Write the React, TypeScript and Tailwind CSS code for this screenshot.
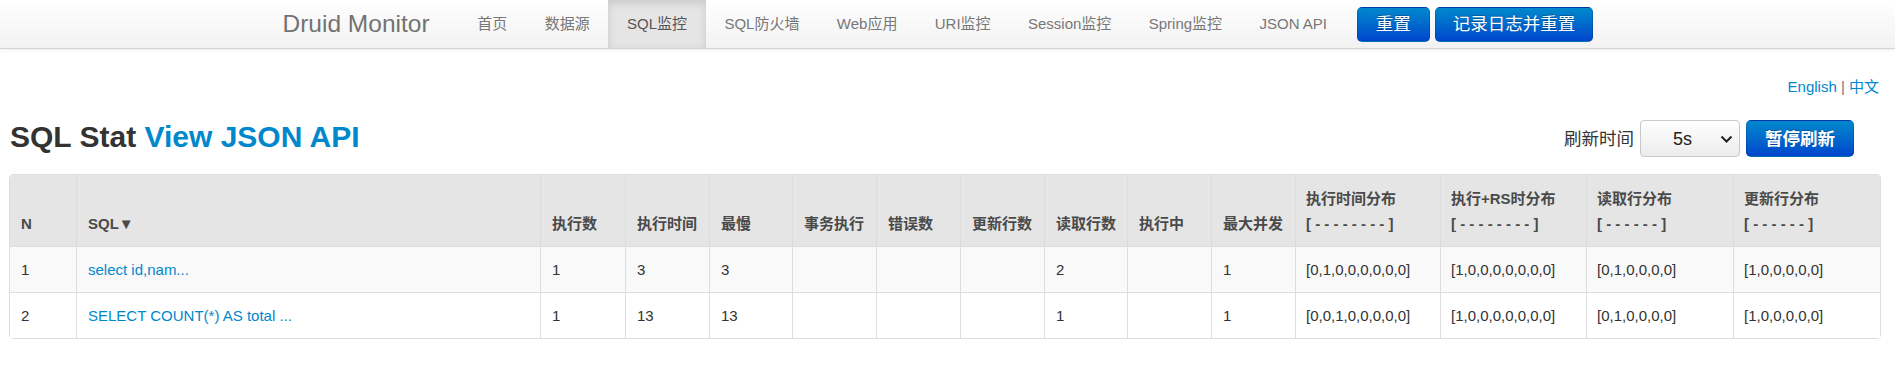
import React from "react";

const navItems = ["首页", "数据源", "SQL监控", "SQL防火墙", "Web应用", "URI监控", "Session监控", "Spring监控", "JSON API"];

const cols = [66, 464, 85, 84, 83, 84, 84, 84, 83, 84, 84, 145, 146, 147, 147];

const simpleHeads = ["执行数", "执行时间", "最慢", "事务执行", "错误数", "更新行数", "读取行数", "执行中", "最大并发"];
const distHeads: [string, string][] = [
  ["执行时间分布", "[ - - - - - - - - ]"],
  ["执行+RS时分布", "[ - - - - - - - - ]"],
  ["读取行分布", "[ - - - - - - ]"],
  ["更新行分布", "[ - - - - - - ]"],
];

const rows = [
  {
    n: "1",
    sql: "select id,nam...",
    vals: ["1", "3", "3", "", "", "", "2", "", "1"],
    dist: ["[0,1,0,0,0,0,0,0]", "[1,0,0,0,0,0,0,0]", "[0,1,0,0,0,0]", "[1,0,0,0,0,0]"],
  },
  {
    n: "2",
    sql: "SELECT COUNT(*) AS total ...",
    vals: ["1", "13", "13", "", "", "", "1", "", "1"],
    dist: ["[0,0,1,0,0,0,0,0]", "[1,0,0,0,0,0,0,0]", "[0,1,0,0,0,0]", "[1,0,0,0,0,0]"],
  },
];

export default function App() {
  return (
    <div className="min-h-[374px] bg-white font-['Liberation_Sans','Noto_Sans_CJK_SC',sans-serif] text-[#333]">
      {/* navbar */}
      <div className="h-[49px] bg-gradient-to-b from-white to-[#f2f2f2] border-b border-[#d4d4d4] shadow-[0_1px_4px_rgba(0,0,0,0.065)]">
        <div className="mx-auto w-[1370px] pl-[20px] flex items-center h-[48px]">
          <div className="text-[24.5px] leading-[30px] text-[#737373] mr-[29px]">Druid Monitor</div>
          <div className="flex h-[48px]">
            {navItems.map((t) => (
              <div
                key={t}
                className={
                  t === "SQL监控"
                    ? "h-[48px] flex items-center px-[18.7px] text-[15px] leading-[20px] text-[#555] bg-[#e5e5e5] shadow-[inset_0_3px_8px_rgba(0,0,0,0.125)]"
                    : "h-[48px] flex items-center px-[18.7px] text-[15px] leading-[20px] text-[#777]"
                }
              >
                {t}
              </div>
            ))}
          </div>
          <div className="flex gap-[5px] ml-[11px]">
            <div className="h-[35px] px-[18px] flex items-center rounded-[5px] bg-gradient-to-b from-[#0088cc] to-[#0044cc] border border-[rgba(0,0,0,0.15)] text-white text-[17.5px] leading-[20px] [text-shadow:0_-1px_0_rgba(0,0,0,0.25)]">
              重置
            </div>
            <div className="h-[35px] px-[17px] flex items-center rounded-[5px] bg-gradient-to-b from-[#0088cc] to-[#0044cc] border border-[rgba(0,0,0,0.15)] text-white text-[17.5px] leading-[20px] [text-shadow:0_-1px_0_rgba(0,0,0,0.25)]">
              记录日志并重置
            </div>
          </div>
        </div>
      </div>

      {/* content */}
      <div className="pl-[9px] pr-[16px]">
        <div className="mt-[28px] text-right text-[15px] leading-[20px]">
          <span className="text-[#0088cc]">English</span>
          <span className="text-[#777]"> | </span>
          <span className="text-[#0088cc]">中文</span>
        </div>

        <div className="mt-[23px] h-[37px] flex items-center justify-between">
          <h1 className="mb-[4px] pl-[1px] text-[30px] leading-[30px] font-bold text-[#333]">
            SQL Stat <span className="text-[#0088cc]">View JSON API</span>
          </h1>
          <div className="flex items-center pr-[25px]">
            <span className="text-[17.5px] leading-[20px] text-[#333] mr-[6px]">刷新时间</span>
            <div className="w-[100px] h-[37px] flex items-center rounded-[4px] border border-[#c8c8c8] bg-gradient-to-b from-white to-[#ececec]">
              <span className="pl-[32px] text-[18px] leading-[20px] text-[#222]">5s</span>
              <svg className="ml-auto mr-[6px]" width="13" height="8" viewBox="0 0 13 8">
                <path d="M1.5 1.5 L6.5 6.5 L11.5 1.5" fill="none" stroke="#222" strokeWidth="2" />
              </svg>
            </div>
            <div className="ml-[6px] h-[37px] px-[18px] flex items-center rounded-[5px] bg-gradient-to-b from-[#0088cc] to-[#0044cc] border border-[rgba(0,0,0,0.15)] text-white font-bold text-[17.5px] leading-[20px] [text-shadow:0_-1px_0_rgba(0,0,0,0.25)]">
              暂停刷新
            </div>
          </div>
        </div>

        <table className="mt-[17px] w-full table-fixed border-separate border-spacing-0 border border-[#ddd] rounded-[4px] text-[15px]">
          <colgroup>
            {cols.map((w, i) => (
              <col key={i} style={{ width: w }} />
            ))}
          </colgroup>
          <thead>
            <tr>
              <th className="bg-[#e5e5e5] rounded-tl-[4px] text-left align-bottom font-bold text-[#4a4a4a] leading-[25px] pt-[11px] pb-[10px] px-[11px]">
                N
              </th>
              <th className="bg-[#e5e5e5] border-l border-[#ddd] text-left align-bottom font-bold text-[#4a4a4a] leading-[25px] pt-[11px] pb-[10px] px-[11px]">
                SQL▼
              </th>
              {simpleHeads.map((h) => (
                <th
                  key={h}
                  className="bg-[#e5e5e5] border-l border-[#ddd] text-left align-bottom font-bold text-[#4a4a4a] leading-[25px] pt-[11px] pb-[10px] px-[11px] whitespace-nowrap"
                >
                  {h}
                </th>
              ))}
              {distHeads.map(([a, b], i) => (
                <th
                  key={a}
                  className={
                    i === 3
                      ? "bg-[#e5e5e5] rounded-tr-[4px] border-l border-[#ddd] text-left align-bottom font-bold text-[#4a4a4a] leading-[25px] pt-[11px] pb-[10px] px-[10px] whitespace-nowrap"
                      : "bg-[#e5e5e5] border-l border-[#ddd] text-left align-bottom font-bold text-[#4a4a4a] leading-[25px] pt-[11px] pb-[10px] px-[10px] whitespace-nowrap"
                  }
                >
                  <div>{a}</div>
                  <div className="whitespace-pre">{b}</div>
                </th>
              ))}
            </tr>
          </thead>
          <tbody>
            {rows.map((r, ri) => {
              const bg = ri === 0 ? "bg-[#f9f9f9]" : "bg-white";
              return (
                <tr key={r.n}>
                  <td className={`${bg} border-t border-[#ddd] leading-[25px] py-[10px] px-[11px] text-[#333]`}>{r.n}</td>
                  <td className={`${bg} border-t border-l border-[#ddd] leading-[25px] py-[10px] px-[11px] text-[#0088cc]`}>{r.sql}</td>
                  {r.vals.map((v, i) => (
                    <td key={i} className={`${bg} border-t border-l border-[#ddd] leading-[25px] py-[10px] px-[11px] text-[#333]`}>
                      {v}
                    </td>
                  ))}
                  {r.dist.map((v, i) => (
                    <td key={i} className={`${bg} border-t border-l border-[#ddd] leading-[25px] py-[10px] px-[10px] text-[#333] whitespace-nowrap`}>
                      {v}
                    </td>
                  ))}
                </tr>
              );
            })}
          </tbody>
        </table>
      </div>
    </div>
  );
}
